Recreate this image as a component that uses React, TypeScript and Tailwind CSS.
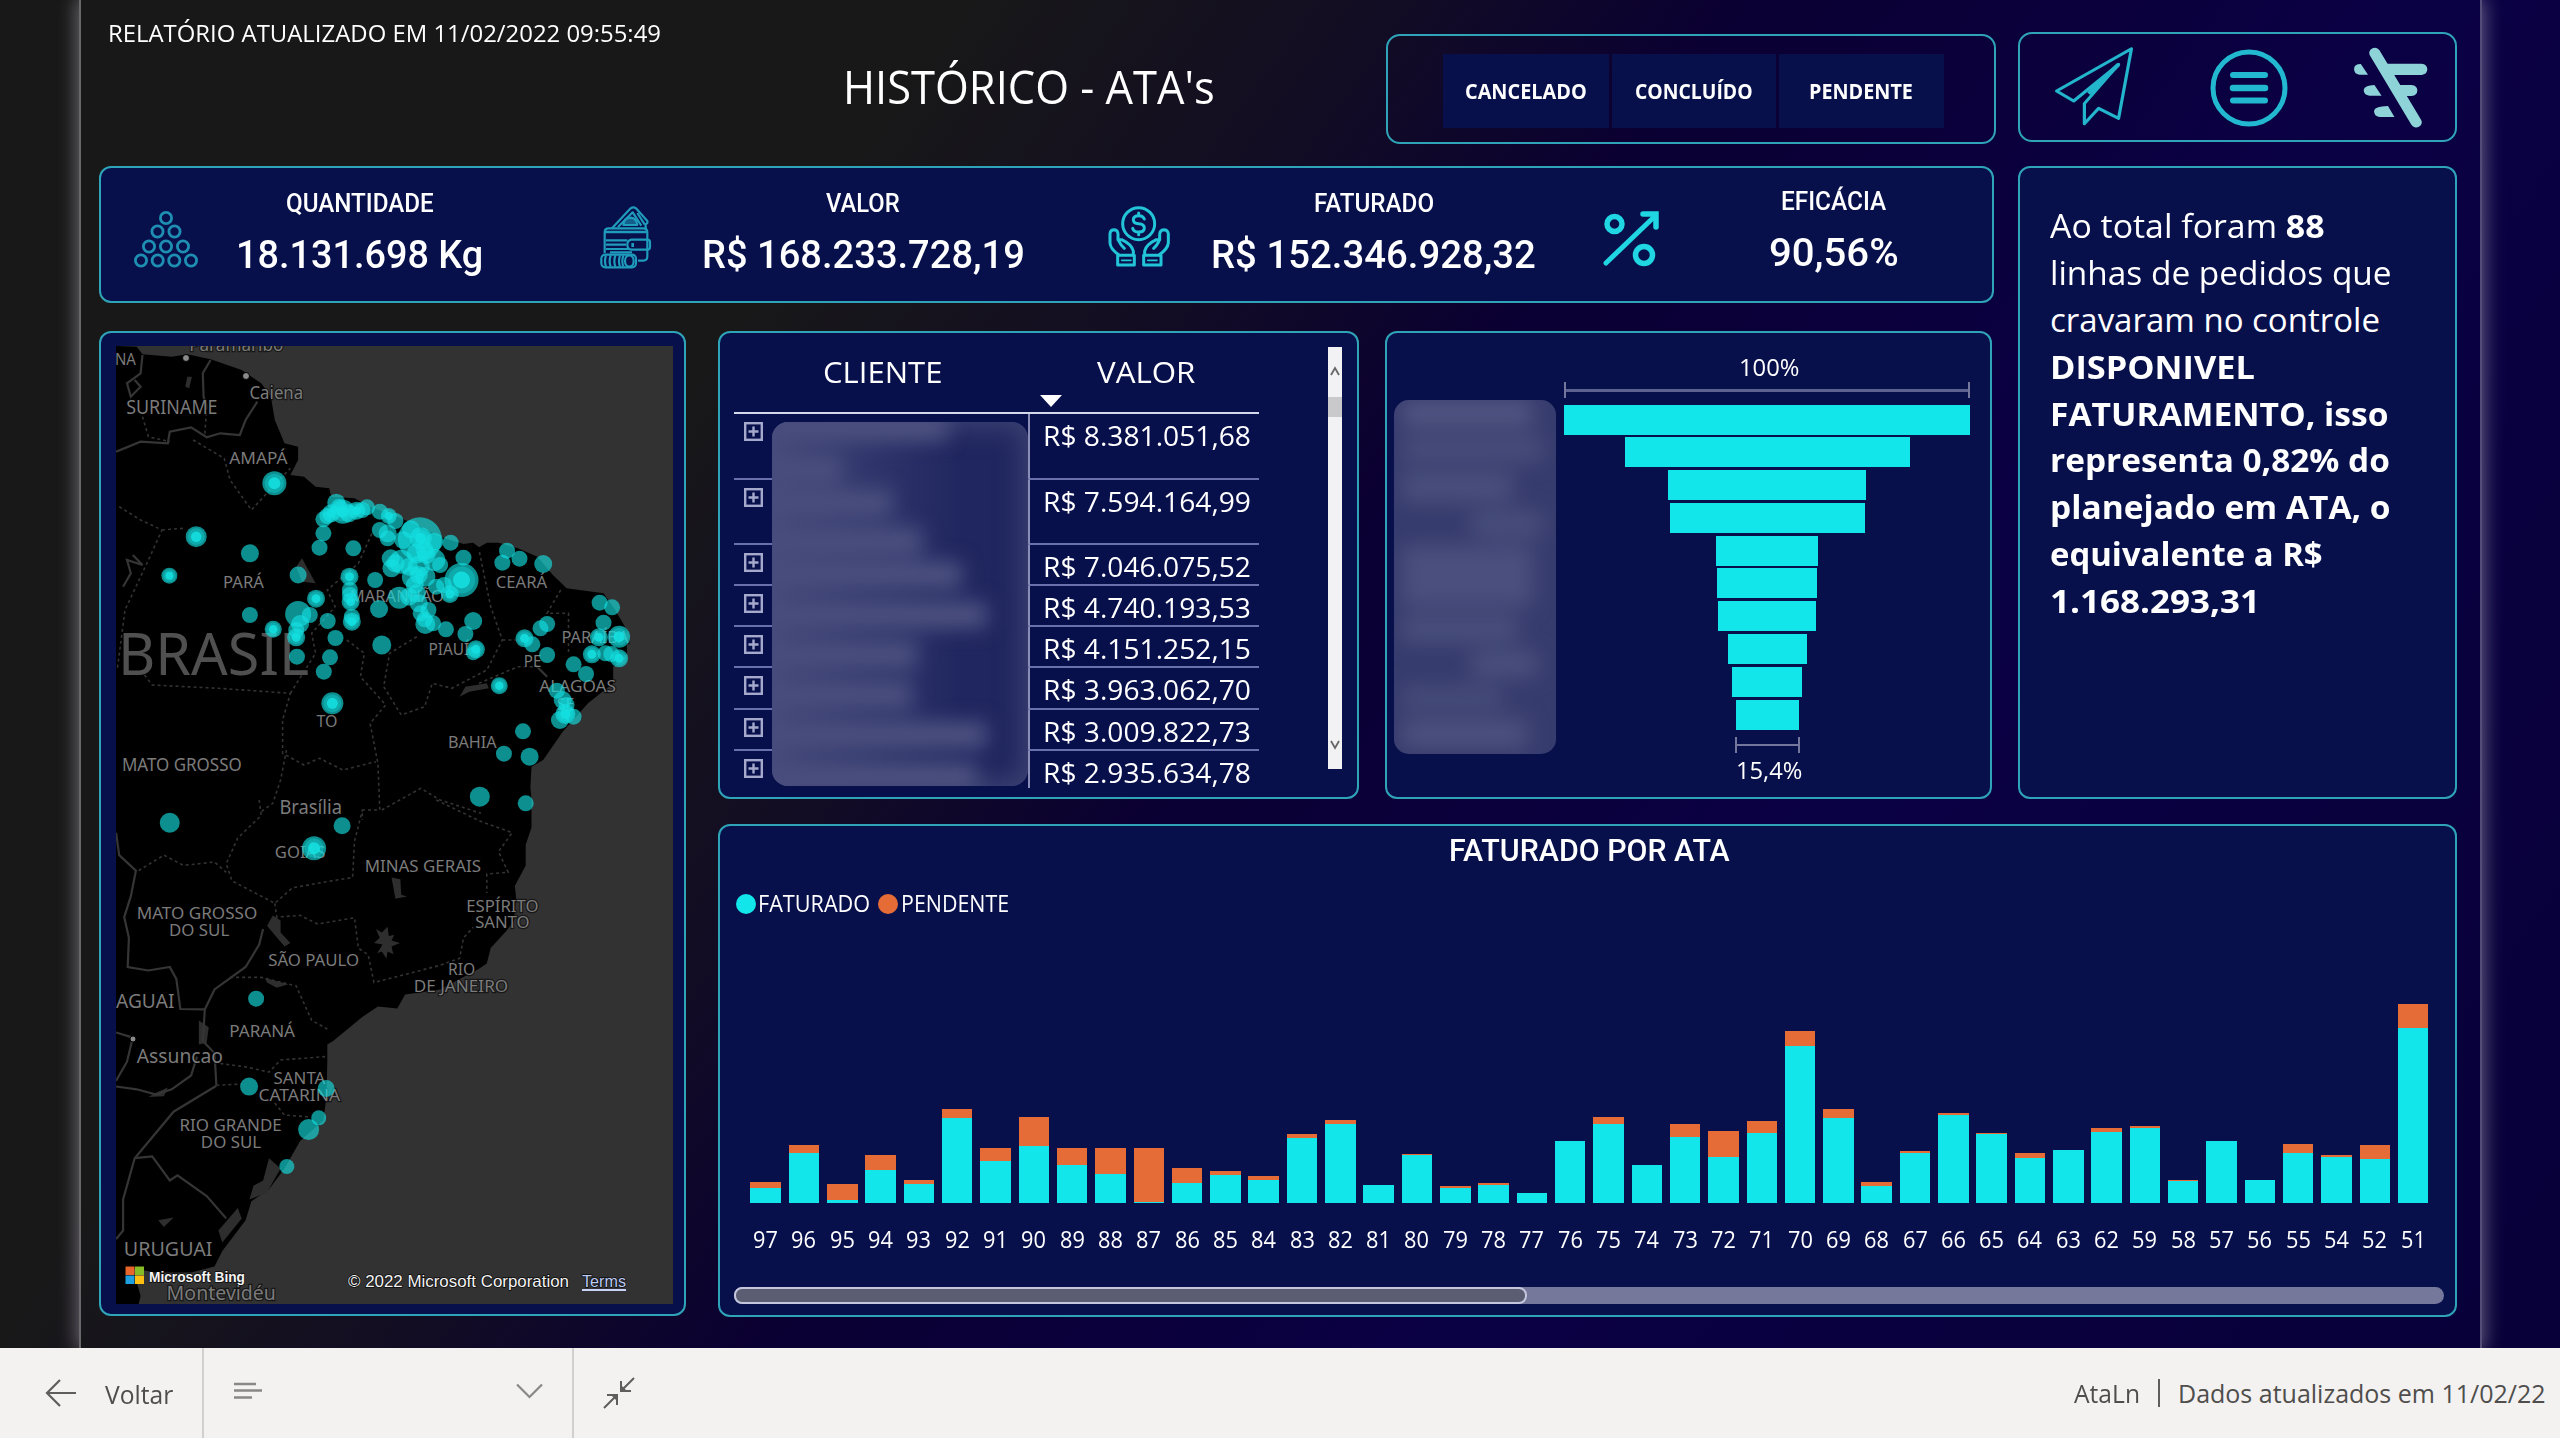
import { useLayoutEffect, useRef, useState, type ReactNode } from "react";

/* Squeezes or stretches one line of text to the width of its box. */
function Fit({ className = "", children }: { className?: string; children: ReactNode }) {
  const box = useRef<HTMLDivElement>(null);
  const line = useRef<HTMLSpanElement>(null);
  const [scale, setScale] = useState(1);
  useLayoutEffect(() => {
    if (box.current && line.current) setScale(box.current.clientWidth / line.current.offsetWidth);
  }, []);
  return (
    <div ref={box} className={`shrink-0 whitespace-nowrap leading-none ${className}`}>
      <span ref={line} className="inline-block origin-left" style={{ transform: `scaleX(${scale})` }}>
        {children}
      </span>
    </div>
  );
}

const PANEL = "rounded-[12px] border-2 border-[#2fa3b8] bg-[#08104c]";

/* ---------- map ---------- */
type P = [number, number];
const north = (x: number, y: number): P => [90 + x / 2.5705, 320 + y / 3];
const south = (x: number, y: number): P => [90 + x / 2.5705, 800 + y / 2.9037];
type Conv = (x: number, y: number) => P;
const line = (c: Conv, n: number[]) => {
  const out: string[] = [];
  for (let i = 0; i < n.length; i += 2) out.push(c(n[i], n[i + 1]).map((v) => v.toFixed(1)).join(","));
  return out.join(" ");
};

const COAST_N = [67, 78, 120, 80, 135, 103, 210, 110, 250, 103, 310, 118, 390, 150, 440, 190, 465, 230, 475, 300, 500, 370, 535, 380, 535, 420, 515, 465, 550, 470, 580, 500, 615, 505, 620, 530, 680, 535, 720, 560, 790, 590, 850, 620, 900, 650, 960, 672, 985, 668, 1000, 682, 1020, 668, 1050, 668, 1100, 685, 1150, 710, 1190, 765, 1225, 805, 1320, 820, 1350, 870, 1380, 930, 1380, 1000, 1345, 1040, 1345, 1090, 1280, 1150, 1215, 1235, 1165, 1320, 1135, 1340, 1132, 1400, 1135, 1440];
const COAST_S = [1135, 0, 1135, 80, 1120, 130, 1120, 190, 1092, 250, 1095, 280, 1090, 350, 1070, 380, 1030, 430, 1020, 475, 1000, 490, 900, 550, 810, 565, 790, 605, 740, 600, 700, 630, 625, 700, 610, 710, 610, 760, 608, 860, 600, 930, 540, 990, 500, 1070, 460, 1130, 415, 1165, 400, 1220, 340, 1310, 320, 1355, 260, 1372, 170, 1372, 110, 1360, 130, 1440, 125, 1464, 67, 1464];

const BORDERS_N = [
  [67, 395, 130, 365, 200, 370, 205, 335, 260, 322, 300, 352, 335, 340, 385, 345, 400, 300, 430, 245],
  [310, 120, 290, 160, 292, 230, 300, 260],
  [135, 105, 130, 160, 95, 190, 105, 230, 130, 200, 115, 180],
  [85, 800, 105, 760, 95, 720, 135, 735, 110, 705],
  [1145, 1035, 1175, 1070],
];
const BORDERS_S = [
  [67, 95, 75, 160, 118, 205, 105, 280, 88, 340, 100, 400, 97, 485, 150, 495, 205, 485, 222, 520, 232, 607, 295, 608, 290, 700, 320, 735, 325, 830],
  [295, 608, 320, 550, 400, 485, 435, 420, 445, 375],
  [325, 830, 215, 905, 115, 1040, 85, 1160, 85, 1250, 67, 1275],
  [115, 1040, 160, 1035, 205, 1105, 225, 1090, 300, 1150, 350, 1215],
  [67, 675, 110, 690, 95, 760, 67, 815],
  [67, 832, 120, 840, 170, 855, 210, 840, 260, 800, 275, 745],
];
const DOTTED_N = [
  [135, 290, 150, 350, 205, 365],
  [300, 260, 295, 345],
  [265, 360, 345, 415, 360, 480, 415, 570, 470, 500, 515, 445],
  [75, 560, 130, 600, 185, 630, 150, 720, 90, 870, 70, 1050],
  [185, 630, 240, 625],
  [140, 1065, 160, 1095, 330, 1105, 515, 1120, 495, 1200, 495, 1300, 550, 1335, 590, 1315, 650, 1350, 735, 1325],
  [515, 1120, 580, 1000, 570, 940, 630, 860, 610, 810, 690, 730, 725, 640],
  [660, 960, 705, 1000, 695, 1070, 760, 1155, 720, 1210, 740, 1330, 745, 1470, 700, 1470, 700, 1500],
  [840, 950, 770, 1000, 755, 1100, 800, 1185, 860, 1160, 880, 1090, 930, 1105, 1020, 1050, 1060, 960, 1030, 860, 1000, 690],
  [1210, 810, 1175, 880, 1230, 880, 1230, 1000],
  [1060, 960, 1100, 960],
  [1000, 1090, 1100, 1040, 1150, 1040],
  [750, 1470, 850, 1405, 900, 1440, 1005, 1480],
  [505, 1290, 490, 1380, 470, 1450, 435, 1480],
];
const DOTTED_S = [
  [435, 0, 440, 45, 380, 110, 350, 185, 365, 235, 475, 300, 520, 255, 620, 235, 675, 225, 680, 120, 700, 30],
  [125, 205, 190, 160, 240, 190, 320, 180, 350, 210],
  [475, 300, 480, 340, 540, 335, 585, 360, 680, 342, 690, 430, 715, 450, 730, 530, 900, 480, 950, 460, 960, 400, 985, 370],
  [890, 0, 1000, 60, 1085, 95, 1050, 150, 1075, 210, 1020, 215, 1020, 270],
  [360, 515, 440, 515, 530, 540, 570, 640, 610, 665],
  [335, 765, 400, 775, 460, 790, 490, 755, 605, 745],
  [325, 828, 390, 825],
  [475, 880, 500, 915, 560, 920],
];
const LAKES_N = [[545, 715, 580, 790, 545, 785, 530, 740], [250, 170, 262, 170, 255, 205, 245, 200], [950, 1130, 965, 1100, 1020, 1090, 1025, 1105, 975, 1115]];
const LAKES_S = [
  [470, 335, 490, 350, 490, 385, 515, 415, 500, 425, 455, 365],
  [775, 225, 798, 230, 800, 275, 815, 280, 785, 287, 780, 255],
  [735, 375, 750, 385, 765, 368, 768, 395, 782, 392, 775, 408, 797, 415, 775, 425, 780, 448, 765, 440, 762, 460, 750, 440, 738, 445, 752, 420, 730, 415, 745, 400],
  [450, 517, 510, 535, 480, 545, 455, 530],
  [280, 640, 305, 660, 300, 705, 280, 710],
  [460, 1040, 490, 1070, 455, 1140, 410, 1160, 420, 1120, 445, 1105],
  [380, 1185, 390, 1215, 340, 1285, 330, 1250],
  [175, 1220, 215, 1212, 190, 1240],
  [170, 850, 200, 835, 190, 860, 150, 862],
];

type Label = [string, number, number, number, number];
const LABELS_N: Label[] = [
  ["NA", 64, 118, 135, 17],
  ["Paramaribo", 255, 497, 92, 18],
  ["Caiena", 410, 548, 236, 18],
  ["SURINAME", 93, 328, 282, 19],
  ["AMAPÁ", 358, 508, 432, 17],
  ["PARÁ", 342, 447, 803, 17],
  ["CEARÁ", 1043, 1175, 803, 17],
  ["MARANHÃO", 668, 910, 846, 17],
  ["PIAUÍ", 870, 975, 1005, 17],
  ["PARAÍBA", 1212, 1384, 970, 17],
  ["PE", 1115, 1160, 1040, 17],
  ["ALAGOAS", 1155, 1352, 1117, 17],
  ["SE", 1200, 1245, 1170, 17],
  ["TO", 582, 636, 1222, 17],
  ["BAHIA", 920, 1045, 1285, 17],
  ["MATO GROSSO", 82, 390, 1353, 18],
  ["Brasília", 487, 648, 1482, 19],
];
const LABELS_S: Label[] = [
  ["GOIÁS", 475, 605, 167, 17],
  ["MINAS GERAIS", 706, 1005, 210, 17],
  ["MATO GROSSO", 120, 430, 346, 17],
  ["DO SUL", 203, 358, 395, 17],
  ["SÃO PAULO", 458, 692, 482, 17],
  ["ESPÍRITO", 967, 1153, 324, 17],
  ["SANTO", 990, 1130, 373, 17],
  ["RIO", 920, 990, 509, 17],
  ["DE JANEIRO", 832, 1075, 557, 17],
  ["PARANÁ", 358, 527, 689, 17],
  ["AGUAI", 67, 217, 605, 19],
  ["Assuncao", 120, 342, 765, 20],
  ["SANTA", 472, 605, 825, 17],
  ["CATARINA", 433, 643, 873, 17],
  ["RIO GRANDE", 230, 493, 962, 17],
  ["DO SUL", 285, 440, 1010, 17],
  ["URUGUAI", 87, 315, 1323, 19],
  ["Montevidéu", 197, 478, 1452, 19],
];

/* x, y, radius, and 1 where a brighter core sits in the bubble */
const DOTS_N = [
  [474, 490, 12, 1], [273, 650, 10.5, 1], [204, 767, 8, 1], [411, 700, 9, 0], [535, 765, 8.5, 0], [411, 885, 8, 0], [471, 928, 8.5, 1],
  [677, 685, 8, 0], [600, 640, 8, 0], [590, 683, 8, 0], [733, 780, 8, 0], [581, 836, 9, 1], [535, 882, 13, 0], [565, 885, 8, 0],
  [540, 912, 9, 0], [530, 930, 8, 0], [530, 952, 9, 1], [532, 1010, 8, 0], [611, 903, 8, 0], [631, 954, 8, 0], [617, 1012, 8, 0], [601, 1055, 8, 0],
  [623, 1150, 11, 1], [667, 770, 9, 1], [668, 810, 8, 0], [668, 825, 8, 0], [670, 845, 9, 1], [673, 890, 8, 0], [673, 905, 9, 1], [743, 867, 9, 0], [750, 975, 9.5, 0],
  [795, 833, 11, 0], [600, 598, 8, 0], [610, 588, 8, 0], [620, 580, 9, 1], [633, 548, 9, 0], [640, 560, 8, 0], [650, 575, 12, 1], [665, 580, 9, 0], [685, 572, 9, 1], [700, 570, 8, 0], [712, 562, 8, 0],
  [745, 575, 8, 0], [768, 588, 8, 1], [785, 603, 8, 0], [745, 630, 8, 0], [765, 640, 9, 0], [765, 655, 8, 0], [848, 658, 22, 0],
  [825, 628, 9, 0], [850, 655, 11, 1], [885, 665, 9, 0], [805, 660, 9, 0], [840, 700, 10, 0], [860, 690, 9, 0], [800, 725, 12, 0], [773, 715, 9, 0],
  [775, 745, 9, 0], [785, 730, 9, 0], [845, 740, 11, 0], [820, 740, 9, 0], [885, 720, 11, 0], [865, 705, 9, 0], [900, 735, 8, 0], [830, 772, 11, 0], [862, 770, 10, 0], [845, 765, 9, 0], [835, 795, 9, 0],
  [890, 800, 8, 0], [910, 795, 8, 0], [955, 780, 17, 1], [925, 822, 9, 1], [927, 668, 8, 0], [960, 713, 8, 0], [840, 820, 9, 0], [845, 850, 9, 0], [850, 880, 8, 0],
  [870, 870, 8, 0], [860, 898, 8, 0], [862, 912, 10, 0], [882, 910, 8, 0], [915, 928, 8, 0], [985, 903, 9, 0], [965, 942, 8, 0], [992, 988, 9, 1],
  [985, 1000, 7, 0], [820, 830, 9, 0], [1072, 692, 8, 0], [1060, 728, 8, 0], [1104, 716, 8, 0], [1165, 732, 9, 0], [1310, 848, 8, 0],
  [1342, 862, 8, 0], [1320, 908, 8, 0], [1360, 950, 11, 1], [1308, 952, 9, 1], [1290, 1003, 9, 1], [1325, 1000, 8, 0], [1340, 1002, 8, 0], [1360, 1015, 9, 1],
  [1175, 912, 8, 0], [1158, 925, 8, 0], [1117, 955, 9, 1], [1137, 973, 8, 0], [1175, 1005, 8, 0], [1243, 1033, 8, 0], [1275, 1062, 8, 0],
  [1052, 1097, 8.5, 1], [1200, 1112, 8, 0], [1215, 1140, 9, 0], [1222, 1182, 10, 1], [1208, 1200, 9, 0], [1243, 1190, 8, 0],
  [1225, 1155, 8, 0], [1113, 1234, 8, 0], [1064, 1301, 8, 0], [1130, 1310, 9, 0], [1002, 1430, 10, 0], [1120, 1450, 8, 0],
];
const DOTS_S = [
  [205, 66, 10, 0], [648, 75, 8.5, 0], [576, 140, 12, 1], [427, 577, 8, 0], [409, 832, 9, 0], [607, 838, 8.5, 0], [588, 923, 7.5, 0],
  [562, 957, 10.5, 0], [506, 1064, 7.5, 0],
];

function MapHalf({ conv, labels }: { conv: Conv; labels: Label[] }) {
  return (
    <g fontFamily="'Noto Sans', 'Open Sans', sans-serif" fill="#7b7b7b" stroke="#000" strokeWidth="2.5" strokeOpacity=".55" paintOrder="stroke">
      {labels.map(([t, x0, x1, y, s], i) => {
        const [x, yy] = conv(x0, y);
        return (
          <text key={i} x={x} y={yy} fontSize={s} textLength={(x1 - x0) / 2.5705} lengthAdjust="spacingAndGlyphs">
            {t}
          </text>
        );
      })}
    </g>
  );
}

function Bubbles({ conv, dots }: { conv: Conv; dots: number[][] }) {
  return (
    <g fill="#14e0e2">
      {dots.map(([x, y, r, core], i) => {
        const [cx, cy] = conv(x, y);
        return (
          <g key={i}>
            <circle cx={cx} cy={cy} r={r} fillOpacity=".64" />
            {core === 1 && <circle cx={cx} cy={cy} r={r * 0.8} fillOpacity=".35" />}
            {core === 1 && <circle cx={cx} cy={cy} r={r * 0.5} fillOpacity=".85" />}
          </g>
        );
      })}
    </g>
  );
}

function BrazilMap() {
  const solid = { fill: "none", stroke: "#353535", strokeWidth: 2.2 };
  const dotted = { fill: "none", stroke: "#333", strokeWidth: 1.6, strokeDasharray: "3 3" };
  return (
    <svg className="h-[958px] w-[557px]" viewBox="116 346 557 958">
      <rect x="116" y="346" width="557" height="958" fill="#323232" />
      <polygon points={`${line(north, COAST_N)} ${line(south, COAST_S)} 116,1304 116,346`} fill="#000" />
      {[...LAKES_N.map((l) => line(north, l)), ...LAKES_S.map((l) => line(south, l))].map((p, i) => (
        <polygon key={i} points={p} fill="#2e2e2e" />
      ))}
      {[...BORDERS_N.map((l) => line(north, l)), ...BORDERS_S.map((l) => line(south, l))].map((p, i) => (
        <polyline key={i} points={p} {...solid} />
      ))}
      {[...DOTTED_N.map((l) => line(north, l)), ...DOTTED_S.map((l) => line(south, l))].map((p, i) => (
        <polyline key={i} points={p} {...dotted} />
      ))}
      <g fill="#8a8a8a" stroke="#000" strokeWidth="1">
        <circle cx="186" cy="358" r="3.5" />
        <circle cx="246" cy="376" r="3.5" />
        <circle cx="133" cy="1039" r="3" />
      </g>
      <text x="118" y="675" fontFamily="'Noto Sans', sans-serif" fontSize="58" fill="#505050" textLength="191" lengthAdjust="spacingAndGlyphs">
        BRASIL
      </text>
      <MapHalf conv={north} labels={LABELS_N} />
      <MapHalf conv={south} labels={LABELS_S} />
      <Bubbles conv={north} dots={DOTS_N} />
      <Bubbles conv={south} dots={DOTS_S} />
      <rect x="125.5" y="1266.5" width="9" height="8.5" fill="#e8652b" />
      <rect x="135" y="1266.5" width="9" height="8.5" fill="#86bc25" />
      <rect x="125.5" y="1275.5" width="9" height="8.5" fill="#1f9fe0" />
      <rect x="135" y="1275.5" width="9" height="8.5" fill="#fcbf12" />
      <g fontFamily="'Liberation Sans', Arial, sans-serif" fill="#f4f4f4" stroke="#000" strokeWidth="1.5" strokeOpacity=".8" paintOrder="stroke">
        <text x="149" y="1282" fontSize="15" fontWeight="bold" textLength="96" lengthAdjust="spacingAndGlyphs">
          Microsoft Bing
        </text>
        <text x="348" y="1287" fontSize="16.5" textLength="221" lengthAdjust="spacingAndGlyphs">
          © 2022 Microsoft Corporation
        </text>
        <text x="582" y="1287" fontSize="16.5" fill="#bccaf5" textLength="44" lengthAdjust="spacingAndGlyphs">
          Terms
        </text>
      </g>
      <rect x="582" y="1289" width="44" height="2" fill="#c9d3f7" />
    </svg>
  );
}

/* ---------- icons ---------- */
function PyramidIcon() {
  const rows = [
    [218, [166]],
    [231.5, [157.5, 174.5]],
    [246.5, [149, 166, 183]],
    [260.5, [141, 157.7, 174.3, 191]],
  ] as [number, number[]][];
  return (
    <svg className="h-[62px] w-[64px]" viewBox="134 208 64 62" fill="none" stroke="#1e8fb2" strokeWidth="2.8">
      {rows.map(([y, xs]) => xs.map((x) => <circle key={`${x}-${y}`} cx={x} cy={y} r="5.6" />))}
    </svg>
  );
}

function MoneyIcon() {
  return (
    <svg className="h-[64px] w-[52px]" viewBox="30 46 156 192" fill="none" stroke="#1f9cbc" strokeWidth="6.5" strokeLinejoin="round">
      <path d="M66 116 L122 56 Q130 50 138 56 L158 78 L172 94 Q174 102 166 104 L168 116" />
      <path d="M84 112 L128 68 L154 108" />
      <path d="M100 106 Q102 84 122 84 Q140 86 142 106 Z" fill="#145f8c" />
      <path d="M142 70 L164 104" />
      <path d="M44 190 V128 Q44 116 56 116 H160 Q172 116 172 128 V200 Q172 213 160 213 H144" />
      <path d="M44 127 H170" strokeWidth="8" />
      <path d="M48 152 H112 M48 178 H118 M48 165 H108" />
      <path d="M124 150 H172 Q180 150 180 158 V172 Q180 180 172 180 H124 Q112 178 112 165 Q112 152 124 150 Z" />
      <path d="M128 160 V172" strokeWidth="8" />
      <rect x="34" y="195" width="104" height="38" rx="12" />
      <path d="M48 197 Q42 214 48 231 M62 197 Q56 214 62 231 M76 197 Q70 214 76 231 M90 197 Q84 214 90 231 M100 197 Q94 214 100 231" />
      <ellipse cx="118" cy="214" rx="13" ry="17" />
      <path d="M60 188 H126" />
    </svg>
  );
}

function HandsIcon() {
  return (
    <svg className="h-[64px] w-[62px]" viewBox="53 46 186 192" fill="none" stroke="#22c4d8" strokeWidth="9" strokeLinejoin="round" strokeLinecap="round">
      <circle cx="145" cy="102" r="48" />
      <path d="M162 88 Q158 78 145 78 Q129 78 129 90 Q129 101 145 102 Q162 103 162 115 Q162 127 145 127 Q130 127 127 116 M145 70 V78 M145 127 V135" strokeWidth="9" />
      <path d="M86 196 Q60 178 59 160 V132 Q60 120 72 120 Q83 121 83 134 V150 L94 150 Q124 164 129 184 V196 M83 150 Q92 168 102 176" />
      <path d="M206 196 Q232 178 234 160 V132 Q232 120 220 120 Q209 121 208 134 V150 L198 150 Q168 164 163 184 V196 M208 150 Q200 168 190 176" />
      <rect x="82" y="197" width="50" height="29" />
      <rect x="160" y="197" width="52" height="29" />
      <path d="M94 212 H122 M172 212 H200" strokeWidth="5" />
    </svg>
  );
}

function PercentIcon() {
  return (
    <svg className="h-[58px] w-[58px]" viewBox="1603 210 58 58" fill="none" stroke="#1fd6e2" strokeWidth="5.5" strokeLinecap="round">
      <circle cx="1615.5" cy="224" r="7.5" />
      <circle cx="1645" cy="255" r="8.5" />
      <path d="M1607 263 L1655 217" strokeWidth="5" />
      <path d="M1644 214 H1657 V227" />
    </svg>
  );
}

function PlaneIcon() {
  return (
    <svg className="h-[80px] w-[82px]" viewBox="150 105 230 240" preserveAspectRatio="none" fill="none" stroke="#22b5cc" strokeWidth="9" strokeLinejoin="round">
      <path d="M370 113 L160 240 L208 270 L334 160 L238 278 V338 L278 292 L334 322 Z" />
      <path d="M334 160 L250 248" strokeWidth="12" />
    </svg>
  );
}

function MenuCircleIcon() {
  return (
    <svg className="h-[78px] w-[78px]" viewBox="0 0 78 78" fill="none" stroke="#22b8d0" strokeWidth="5" strokeLinecap="round">
      <circle cx="39" cy="39" r="36" />
      <path d="M23 26 H55 M23 51.5 H55" strokeWidth="6" />
      <path d="M23 39 H55" strokeWidth="6.5" />
    </svg>
  );
}

function BrandMark() {
  return (
    <svg className="h-[81px] w-[75px]" viewBox="988 112 210 243" preserveAspectRatio="none" fill="#8ed3d8">
      <path d="M1049 130 L1165 338" stroke="#8ed3d8" strokeWidth="31" strokeLinecap="round" />
      <path d="M1076 162 H1180 Q1196 164 1196 179 Q1196 194 1180 196 H1100 Z" />
      <path d="M1110 226 H1152 Q1168 228 1168 242 Q1168 258 1152 259 H1135 Z" />
      <path d="M1010 163 L1030 195 H1006 Q991 193 991 178 Q991 163 1010 163 Z" />
      <path d="M1048 226 L1068 258 H1034 Q1018 256 1018 241 Q1019 227 1048 226 Z" />
      <path d="M1086 289 L1104 322 H1062 Q1047 320 1047 305 Q1047 290 1086 289 Z" />
    </svg>
  );
}

/* ---------- panels ---------- */
function Kpi({ title, value, box, titleWidth, valueWidth }: { title: string; value: string; box: string; titleWidth: string; valueWidth: string }) {
  return (
    <div className={`flex shrink-0 flex-col items-center gap-[19px] font-['Roboto',sans-serif] text-white ${box}`}>
      <Fit className={`text-[26px] font-medium ${titleWidth}`}>{title}</Fit>
      <Fit className={`text-[39.5px] font-medium ${valueWidth}`}>{value}</Fit>
    </div>
  );
}

function KpiPanel() {
  return (
    <section className={`col-start-1 col-span-5 row-start-3 flex w-[1895px] items-start ${PANEL}`}>
      <div className="ml-[33px] mt-[40px]"><PyramidIcon /></div>
      <Kpi box="ml-[40px] mt-[22px] w-[243px]" title="QUANTIDADE" value="18.131.698 Kg" titleWidth="w-[148px]" valueWidth="w-[247px]" />
      <div className="ml-[119px] mt-[37px]"><MoneyIcon /></div>
      <Kpi box="ml-[50px] mt-[22px] w-[322px]" title="VALOR" value="R$ 168.233.728,19" titleWidth="w-[74px]" valueWidth="w-[323px]" />
      <div className="ml-[84px] mt-[37px]"><HandsIcon /></div>
      <Kpi box="ml-[41px] mt-[22px] w-[325px]" title="FATURADO" value="R$ 152.346.928,32" titleWidth="w-[120px]" valueWidth="w-[325px]" />
      <div className="ml-[66px] mt-[42px]"><PercentIcon /></div>
      <Kpi box="ml-[109px] mt-[20px] w-[129px]" title="EFICÁCIA" value="90,56%" titleWidth="w-[105px]" valueWidth="w-[130px]" />
    </section>
  );
}

const CLIENT_ROWS: [string, string][] = [
  ["R$ 8.381.051,68", "h-[66px]"],
  ["R$ 7.594.164,99", "h-[65px]"],
  ["R$ 7.046.075,52", "h-[41px]"],
  ["R$ 4.740.193,53", "h-[41px]"],
  ["R$ 4.151.252,15", "h-[41px]"],
  ["R$ 3.963.062,70", "h-[42px]"],
  ["R$ 3.009.822,73", "h-[41px]"],
  ["R$ 2.935.634,78", "h-[37px]"],
];

const HIDDEN_NAMES = [
  "w-[185px] mt-[-8px]",
  "w-[80px] mt-[18px]",
  "w-[130px] mt-[10px]",
  "w-[160px] mt-[14px]",
  "w-[200px] mt-[10px]",
  "w-[225px] mt-[16px]",
  "w-[155px] mt-[16px]",
  "w-[150px] mt-[16px]",
  "w-[225px] mt-[16px]",
  "w-[215px] mt-[18px]",
];

function ExpandBox() {
  return (
    <svg className="size-[19px]" viewBox="0 0 19 19" fill="none" stroke="#a5a9cc" strokeWidth="2.4">
      <rect x="1.2" y="1.2" width="16.6" height="16.6" />
      <path d="M9.5 4.5 V14.5 M4.5 9.5 H14.5" />
    </svg>
  );
}

function ClientTable() {
  return (
    <section className={`relative col-start-3 row-start-5 flex justify-between font-['Open_Sans',sans-serif] text-white ${PANEL}`}>
      <div className="ml-[14px] w-[525px]">
        <div className="flex h-[81px] items-start border-b-2 border-[#d5d7ea]">
          <Fit className="ml-[89px] mt-[24px] w-[119px] text-[30px]">CLIENTE</Fit>
          <svg className="ml-[98px] mt-[62px] h-[12px] w-[22px]" viewBox="0 0 22 12"><path d="M0 0 H22 L11 12 Z" fill="#fff" /></svg>
          <Fit className="ml-[35px] mt-[24px] w-[98px] text-[30px]">VALOR</Fit>
        </div>
        {CLIENT_ROWS.map(([value, height], i) => (
          <div key={i} className={`flex ${height}`}>
            <div className={`w-[296px] border-r-2 border-r-[#8a8db5] pl-[10px] pt-[8px] ${i < 7 ? "border-b-2 border-b-[#6a70ac]" : ""}`}>
              <ExpandBox />
            </div>
            <div className={`w-[229px] pl-[13px] pt-[7.5px] ${i < 7 ? "border-b-2 border-b-[#6a70ac]" : ""}`}>
              <Fit className="w-[208px] text-[27.5px]">{value}</Fit>
            </div>
          </div>
        ))}
      </div>
      <div className="mr-[15px] mt-[14px] flex h-[422px] w-[14px] flex-col items-center bg-[#f2f2f4]">
        <svg className="mt-[18px] h-[12px] w-[12px]" viewBox="0 0 12 12" fill="none" stroke="#666" strokeWidth="1.8"><path d="M2 10 L6 3 L10 10" /></svg>
        <div className="mt-[20px] h-[20px] w-full bg-[#c9c9cc]" />
        <svg className="mb-[18px] mt-auto h-[12px] w-[12px]" viewBox="0 0 12 12" fill="none" stroke="#666" strokeWidth="1.8"><path d="M2 2 L6 9 L10 2" /></svg>
      </div>
      <div className="absolute left-[52px] top-[89px] h-[364px] w-[256px] overflow-hidden rounded-[16px] bg-[#20265f]">
        <div className="absolute inset-0 shadow-[inset_0_0_26px_6px_#3c4272]" />
        <div className="-ml-[10px] blur-[10px]">
          {HIDDEN_NAMES.map((c, i) => (
            <div key={i} className={`h-[26px] -mb-[2px] bg-[#4f5482] ${c}`} />
          ))}
        </div>
        <div className="absolute inset-y-0 left-0 w-[190px] bg-gradient-to-r from-[#474c7c]/85 to-transparent" />
      </div>
    </section>
  );
}

const FUNNEL = ["w-[406px]", "w-[285px]", "w-[198px]", "w-[195px]", "w-[102px]", "w-[100px]", "w-[98px]", "w-[79px]", "w-[70px]", "w-[63px]"];

function FunnelPanel() {
  return (
    <section className={`col-start-5 row-start-5 flex font-['Open_Sans',sans-serif] text-white ${PANEL}`}>
      <div className="relative ml-[7px] mt-[67px] h-[354px] w-[162px] shrink-0 overflow-hidden rounded-[15px] bg-[#2a3066]">
        <div className="absolute inset-0 flex flex-col gap-[10px] pl-[8px] blur-[10px]">
          <div className="h-[26px] w-[130px] bg-[#5a5e8a]" />
          <div className="h-[26px] w-[140px] bg-[#484d7d]" />
          <div className="h-[30px] w-[110px] bg-[#4c5280]" />
          <div className="ml-[70px] h-[24px] w-[70px] bg-[#4c5280]" />
          <div className="h-[60px] w-[130px] bg-[#4e5383]" />
          <div className="h-[26px] w-[115px] bg-[#4c5280]" />
          <div className="ml-[70px] h-[24px] w-[65px] bg-[#4f5583]" />
          <div className="h-[24px] w-[100px] bg-[#454b7b]" />
          <div className="h-[28px] w-[125px] bg-[#535684]" />
        </div>
        <div className="absolute inset-0 bg-[#474c78]/45" />
      </div>
      <div className="ml-[8px] flex w-[406px] flex-col items-center">
        <Fit className="ml-[4px] mt-[23px] w-[60px] text-[23px]">100%</Fit>
        <div className="mt-[3px] flex h-[16px] w-[406px] items-center border-x-2 border-[#74779c]"><div className="h-[3px] w-full bg-[#5d6190]" /></div>
        <div className="mt-[6.5px] flex flex-col items-center gap-[2.8px]">
          {FUNNEL.map((w, i) => (
            <div key={i} className={`h-[30px] bg-[#12e6ea] ${w}`} />
          ))}
        </div>
        <div className="mt-[7px] flex h-[16px] w-[65px] items-center border-x-2 border-[#74779c]"><div className="h-[2px] w-full bg-[#74779c]" /></div>
        <Fit className="ml-[3px] mt-[6px] w-[66px] text-[23px]">15,4%</Fit>
      </div>
    </section>
  );
}

/* label, total height, billed height */
const BARS: [number, number, number][] = [
  [97, 62, 43], [96, 168, 146], [95, 56, 10], [94, 138, 95], [93, 67, 54], [92, 272, 246], [91, 160, 121], [90, 250, 166],
  [89, 160, 111], [88, 160, 85], [87, 160, 2], [86, 101, 58], [85, 92, 80], [84, 79, 66], [83, 201, 187], [82, 241, 229],
  [81, 53, 51], [80, 143, 139], [79, 48, 44], [78, 59, 52], [77, 28, 28], [76, 180, 178], [75, 249, 229], [74, 111, 111],
  [73, 229, 192], [72, 207, 133], [71, 237, 202], [70, 499, 454], [69, 273, 246], [68, 61, 50], [67, 151, 144], [66, 260, 254],
  [65, 202, 201], [64, 145, 131], [63, 153, 153], [62, 218, 205], [59, 224, 217], [58, 66, 64], [57, 179, 179], [56, 67, 67],
  [55, 172, 146], [54, 139, 132], [52, 167, 127], [51, 575, 506],
];
const UNIT = 2.893;

function ChartPanel() {
  return (
    <section className={`col-start-3 col-span-5 row-start-7 flex flex-col font-['Open_Sans',sans-serif] text-white ${PANEL}`}>
      <Fit className="ml-[729px] mt-[9px] w-[281px] font-['Roboto',sans-serif] text-[31px] font-medium">FATURADO POR ATA</Fit>
      <div className="ml-[16px] mt-[26px] flex items-center">
        <div className="size-[20px] rounded-full bg-[#12e6ea]" />
        <Fit className="ml-[2px] w-[112px] text-[23px]">FATURADO</Fit>
        <div className="ml-[8px] size-[20px] rounded-full bg-[#e66c37]" />
        <Fit className="ml-[3px] w-[108px] text-[23px]">PENDENTE</Fit>
      </div>
      <div className="ml-[26.5px] mt-[60px] flex h-[228px] w-[1686px] items-end">
        {BARS.map(([label, total, billed]) => (
          <div key={label} className="flex flex-1 flex-col items-center">
            <div className="w-[30.5px] bg-[#e66c37]" style={{ height: (total - billed) / UNIT }} />
            <div className="w-[30.5px] bg-[#12e6ea]" style={{ height: billed / UNIT }} />
          </div>
        ))}
      </div>
      <div className="ml-[26.5px] mt-[25px] flex w-[1686px]">
        {BARS.map(([label]) => (
          <div key={label} className="flex flex-1 justify-center">
            <Fit className="w-[25px] text-[23.5px]">{label}</Fit>
          </div>
        ))}
      </div>
      <div className="ml-[14px] mt-[35px] h-[17px] w-[1710px] rounded-full bg-[#75779b]">
        <div className="h-[17px] w-[793px] rounded-[8px] border-2 border-[#c3c6dc] bg-[#5b5e72]" />
      </div>
    </section>
  );
}

const SUMMARY: [string, ReactNode, boolean][] = [
  ["w-[275px]", <>Ao total foram <b>88</b></>, false],
  ["w-[342px]", "linhas de pedidos que", false],
  ["w-[330px]", "cravaram no controle", false],
  ["w-[205px]", "DISPONIVEL", true],
  ["w-[339px]", "FATURAMENTO, isso", true],
  ["w-[340px]", "representa 0,82% do", true],
  ["w-[341px]", "planejado em ATA, o", true],
  ["w-[273px]", "equivalente a R$", true],
  ["w-[210px]", "1.168.293,31", true],
];

export default function App() {
  return (
    <div className="flex h-[1438px] w-[2560px] flex-col overflow-hidden font-['Open_Sans',sans-serif]">
      <div className="h-[1348px] shrink-0 bg-[linear-gradient(126deg,#181818_0%,#181818_27%,#130e22_38%,#0b0032_49%,#0a0044_68%,#080038_100%)] pl-[79px]">
        <div className="flex h-full w-[2403px] border-x-2 border-l-[#68686a] border-r-[#544c78] shadow-[0_0_18px_2px_rgba(180,175,190,0.55)] [clip-path:inset(0_-24px)]">
          <main className="grid w-[2358px] grid-cols-[587px_32px_641px_26px_607px_27px_438px] grid-rows-[143px_23px_137px_28px_468px_25px_493px] pl-[18px]">
            <header className="col-start-1 col-span-3 row-start-1 text-white">
              <Fit className="ml-[9px] mt-[21px] w-[553px] text-[24.5px]">RELATÓRIO ATUALIZADO EM 11/02/2022 09:55:49</Fit>
              <Fit className="ml-[744px] mt-[18px] w-[372px] text-[45px]">HISTÓRICO - ATA's</Fit>
            </header>
            <nav className="col-start-5 row-start-1 ml-[1px] mt-[34px] flex h-[110px] w-[610px] items-center justify-center gap-[3px] rounded-[14px] border-2 border-[#2fa3b8] pl-[4px] pt-[3px] text-[21.5px] font-bold text-white">
              <button className="flex h-[74px] w-[166px] items-center justify-center bg-[#08104c]"><Fit className="w-[122px]">CANCELADO</Fit></button>
              <button className="flex h-[74px] w-[164px] items-center justify-center bg-[#08104c]"><Fit className="w-[118px]">CONCLUÍDO</Fit></button>
              <button className="flex h-[74px] w-[165px] items-center justify-center bg-[#08104c]"><Fit className="w-[104px]">PENDENTE</Fit></button>
            </nav>
            <nav className="col-start-7 row-start-1 -ml-[1px] mt-[32px] flex h-[110px] items-start rounded-[14px] border-2 border-[#2fa3b8]">
              <div className="ml-[33px] mt-[12px]"><PlaneIcon /></div>
              <div className="ml-[75px] mt-[15px]"><MenuCircleIcon /></div>
              <div className="ml-[65px] mt-[13px]"><BrandMark /></div>
            </nav>
            <KpiPanel />
            <section className={`col-start-1 row-start-5 row-span-3 flex h-[985px] pl-[15px] pt-[13px] ${PANEL}`}>
              <BrazilMap />
            </section>
            <ClientTable />
            <FunnelPanel />
            <aside className={`col-start-7 row-start-3 row-span-3 -ml-[1px] flex flex-col gap-[13.9px] pl-[30px] pt-[41px] text-[33px] text-white ${PANEL}`}>
              {SUMMARY.map(([width, text, strong], i) => (
                <Fit key={i} className={`${width} ${strong ? "font-bold" : ""}`}>{text}</Fit>
              ))}
            </aside>
            <ChartPanel />
          </main>
        </div>
      </div>
      <footer className="flex h-[90px] shrink-0 items-stretch bg-[#f3f2f1] text-[25px] text-[#4f4e4c]">
        <div className="flex w-[204px] items-center border-r-2 border-[#d2d0ce]">
          <svg className="ml-[45px] h-[28px] w-[31px]" viewBox="0 0 31 28" fill="none" stroke="#605e5c" strokeWidth="2.2"><path d="M15 1 L2 14 L15 27 M2 14 H31" /></svg>
          <Fit className="ml-[29px] mt-[3px] w-[68px]">Voltar</Fit>
        </div>
        <div className="flex w-[370px] items-center border-r-2 border-[#d2d0ce]">
          <svg className="ml-[30px] -mt-[4px] h-[20px] w-[28px]" viewBox="0 0 28 20" stroke="#8a8886" strokeWidth="2.5"><path d="M0 3 H22 M0 9.5 H28 M0 16.5 H18" /></svg>
          <svg className="ml-[254px] -mt-[4px] h-[16px] w-[27px]" viewBox="0 0 27 16" fill="none" stroke="#8a8886" strokeWidth="2.2"><path d="M1 1.5 L13.5 14 L26 1.5" /></svg>
        </div>
        <svg className="ml-[29px] mt-[29px] h-[32px] w-[32px]" viewBox="0 0 32 32" fill="none" stroke="#605e5c" strokeWidth="2">
          <path d="M31 1 L18 14 M18 4 V14 H28 M1 31 L14 18 M4 18 H14 V28" />
          <path d="M18 8 V14 H24 Z M14 24 V18 H8 Z" fill="#605e5c" stroke="none" />
        </svg>
        <div className="ml-auto mr-[14px] mt-[1px] flex items-center">
          <Fit className="w-[66px]">AtaLn</Fit>
          <div className="mx-[18px] mb-[2px] h-[28px] w-[2px] bg-[#605e5c]" />
          <Fit className="w-[368px]">Dados atualizados em 11/02/22</Fit>
        </div>
      </footer>
    </div>
  );
}
